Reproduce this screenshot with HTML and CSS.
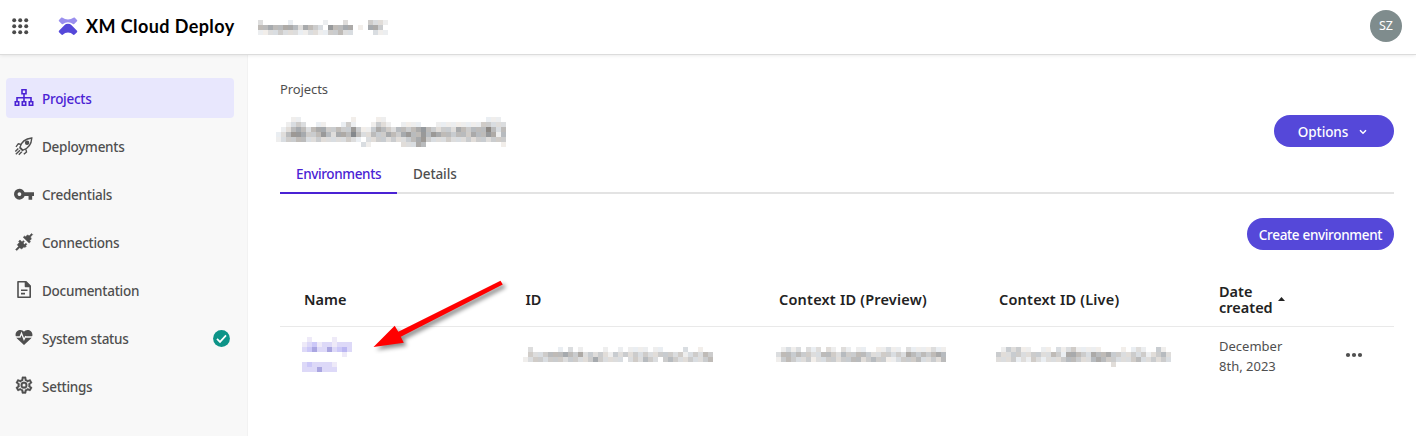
FILE: index.html
```html
<!DOCTYPE html>
<html lang="en">
<head>
<meta charset="utf-8">
<title>XM Cloud Deploy</title>
<link rel="stylesheet" href="styles.css">
</head>
<body>
<header class="topbar">
  <svg class="apps" width="18" height="18" viewBox="0 0 18 18" fill="#4b4b4b"><circle cx="2.2" cy="2.2" r="2"/><circle cx="8.2" cy="2.2" r="2"/><circle cx="14.2" cy="2.2" r="2"/><circle cx="2.2" cy="8.2" r="2"/><circle cx="8.2" cy="8.2" r="2"/><circle cx="14.2" cy="8.2" r="2"/><circle cx="2.2" cy="14.2" r="2"/><circle cx="8.2" cy="14.2" r="2"/><circle cx="14.2" cy="14.2" r="2"/></svg>
  <svg class="logo" width="20" height="20" viewBox="0 0 20 20"><path d="M1 3 3.400.6Q4 .2 4.600.8Q6.800 2.500 10 2.500T15.400.8Q16 .2 16.600.6L19 3Q19.600 3.700 19 4.300L16.200 7Q15.600 7.500 15 7Q12.800 5.200 10 5.200T5 7Q4.400 7.500 3.800 7L1 4.300Q.4 3.700 1 3Z" fill="#9a8fee"/><path d="M10 6.800Q12.200 6.800 13.600 8.200L19 13.800Q19.600 14.500 19 15.200L16.600 17.600Q16 18.200 15.300 17.700Q13 15.600 10 15.600T4.700 17.700Q4 18.200 3.400 17.600L1 15.200Q.4 14.500 1 13.800L6.400 8.200Q7.800 6.800 10 6.800Z" fill="#5548d9"/></svg>
  <span class="brand">XM Cloud Deploy</span>
  <svg class="mosaic org" data-rows="org"></svg>
  <span class="avatar">SZ</span>
</header>
<div class="shell">
  <nav class="sidebar">
    <a class="item active"><svg class="icon" viewBox="0 0 20 20" fill="none" stroke="currentColor" stroke-width="1.600"><path d="M8 1.800h4v4H8zM1.300 13.800h3.400v3.400H1.300zM8.300 13.800h3.400v3.400H8.300zM15.300 13.800h3.400v3.400h-3.400zM10 6v7.500M3 13.500V9.800h14v3.700"/></svg><span>Projects</span></a>
    <a class="item"><svg class="icon" viewBox="0 0 20 20" fill="none" stroke="currentColor" stroke-width="1.400"><path d="M6 11.200Q8 3.200 17.800 2Q17.200 11.400 9 14.200ZM6.500 8.200 4.300 7.700 2 10.800M12 13.700l.5 2.300-2.700 2.300M5.500 11.500 9 15M4.300 12.500 1.300 15.500M6 14.200 1.800 18.300M7.800 15.700l-3 3"/><circle cx="13.100" cy="6.800" r="1.500" fill="currentColor"/></svg><span>Deployments</span></a>
    <a class="item"><svg class="icon" viewBox="1 0.800 22 22" fill="currentColor"><path d="M7 14c-1.100 0-2-.9-2-2s.9-2 2-2 2 .9 2 2-.9 2-2 2m5.650-4C11.830 7.670 9.610 6 7 6a6 6 0 0 0 0 12c2.610 0 4.830-1.670 5.650-4H17v4h4v-4h2v-4z"/></svg><span>Credentials</span></a>
    <a class="item"><svg class="icon" viewBox="0 0 20 20" fill="currentColor" stroke="currentColor" stroke-width=".5"><path d="M1.600 17.400 4.500 14.500 3.300 12.700 5.500 10.300 4.600 9.300 6 8 8 9.900 9.300 8.600 10.400 9.700 9.100 11 10.600 12.500 11.900 11.200 13 12.300 11.700 13.600 12.300 14.300 11 15.600 10 14.800 7.700 16.900 5.700 15.700 2.700 18.500ZM9.200 5.300 10.500 4 11.600 4.800 13.400 2.900 15.300 3.800 17.600 1.500 18.700 2.600 16.500 4.900 17.400 6.900 15.600 8.800 16.500 9.800 15.100 11.100Z"/></svg><span>Connections</span></a>
    <a class="item"><svg class="icon" viewBox="0 0 20 20" fill="none" stroke="currentColor" stroke-width="1.600" stroke-linejoin="round"><path d="M4 1.800h8L16.200 6v11.200H4z"/><path d="M11.500 2v4.500h4.500z" fill="currentColor"/><path d="M7 10.300h6.500M7 13.600h4"/></svg><span>Documentation</span></a>
    <a class="item"><svg class="icon" viewBox="0 0 20 20"><path d="M10 17 3 10.500C-.5 6 3 2 6.400 2 8 2 9.200 2.700 10 3.800 10.800 2.700 12 2 13.600 2 17 2 20.500 6 17 10.500Z" fill="currentColor"/><path d="M1 9h5l1.500-3.800L10 11.500l1.500-3L12.500 9H19" fill="none" stroke="#f8f8f8" stroke-width="1.300"/></svg><span>System status</span><svg class="ok" width="17" height="17" viewBox="0 0 17 17"><circle cx="8.500" cy="8.500" r="8.400" fill="#0d9488"/><path d="m4 8.900 3 3 6-6.500" fill="none" stroke="#fff" stroke-width="1.700"/></svg></a>
    <a class="item"><svg class="icon" viewBox="0 1 24 24" fill="currentColor" stroke="currentColor" stroke-width=".4"><path d="M12 8a4 4 0 0 1 4 4 4 4 0 0 1-4 4 4 4 0 0 1-4-4 4 4 0 0 1 4-4m0 2a2 2 0 0 0-2 2 2 2 0 0 0 2 2 2 2 0 0 0 2-2 2 2 0 0 0-2-2m-2 12c-.25 0-.46-.18-.5-.42l-.37-2.650c-.63-.25-1.170-.59-1.690-.99l-2.490 1.010c-.22.08-.49 0-.61-.22l-2-3.460c-.13-.22-.07-.49.12-.64l2.110-1.660L4.500 12l.07-1-2.110-1.630c-.19-.15-.25-.42-.12-.64l2-3.460c.12-.22.39-.31.61-.22l2.490 1c.52-.39 1.060-.73 1.690-.98l.37-2.650c.04-.24.25-.42.5-.42h4c.25 0 .46.18.5.42l.37 2.650c.63.25 1.170.59 1.690.98l2.490-1c.22-.09.49 0 .61.22l2 3.460c.13.22.07.49-.12.64L19.430 11l.07 1-.07 1 2.110 1.630c.19.15.25.42.12.64l-2 3.460c-.12.22-.39.31-.61.22l-2.490-1c-.52.39-1.060.73-1.690.98l-.37 2.650c-.04.24-.25.42-.5.42h-4m1.250-18l-.37 2.610c-1.200.25-2.260.89-3.030 1.780L5.440 7.350l-.75 1.300L6.800 10.200a5.550 5.550 0 0 0 0 3.600l-2.120 1.560.75 1.300 2.430-1.040c.77.88 1.820 1.520 3.010 1.760l.37 2.620h1.520l.37-2.610c1.190-.25 2.240-.89 3.010-1.770l2.430 1.040.75-1.300-2.120-1.550c.4-1.170.4-2.440 0-3.610l2.110-1.550-.75-1.300-2.410 1.040a5.420 5.420 0 0 0-3.030-1.770L12.750 4z"/></svg><span>Settings</span></a>
  </nav>
  <main class="main">
    <div class="crumb">Projects</div>
    <div class="titlebar">
      <svg class="mosaic project" data-rows="project"></svg>
      <button class="btn options">Options<svg width="8" height="6" viewBox="0 0 8 6"><path d="m1 1.200 3 3 3-3" fill="none" stroke="#fff" stroke-width="1.500"/></svg></button>
    </div>
    <div class="tabs"><a class="tab on">Environments</a><a class="tab">Details</a></div>
    <div class="actions"><button class="btn create">Create environment</button></div>
    <div class="grid head">
      <span>Name</span><span>ID</span><span class="context">Context ID (Preview)</span><span class="context">Context ID (Live)</span>
      <span class="date">Date created<svg class="sort" width="7" height="4" viewBox="0 0 7 4"><path d="M0 4 3.500 0 7 4z" fill="#222"/></svg></span><span></span>
    </div>
    <div class="grid row">
      <svg class="mosaic name" data-rows="name"></svg>
      <svg class="mosaic id" data-rows="id"></svg>
      <svg class="mosaic id" data-rows="preview"></svg>
      <svg class="mosaic id" data-rows="live"></svg>
      <span class="when">December<br>8th, 2023</span>
      <svg class="more" width="18" height="6" viewBox="0 0 18 6" fill="#4f4f4f"><circle cx="3" cy="3" r="2.100"/><circle cx="9" cy="3" r="2.100"/><circle cx="15" cy="3" r="2.100"/></svg>
    </div>
  </main>
</div>
<svg class="arrow" width="150" height="84" viewBox="365 274 150 84"><path d="M500.500 280.800 502.800 284.500 400.800 336.800 403.800 342.800 373.500 347 394.700 325.700 398.300 331.800Z" fill="#f00"/></svg>
<script src="script.js"></script>
</body>
</html>
```

FILE: styles.css
```css
* { box-sizing: border-box; }
body { margin: 0; width: 1416px; height: 436px; overflow: hidden; background: #fff; font-family: "Noto Sans", "Open Sans", sans-serif; font-size: 13.5px; color: #4f4f4f; }
svg { display: block; flex: none; }
.topbar { position: relative; z-index: 1; height: 54px; display: flex; align-items: flex-start; background: #fff; box-shadow: 0 1px 0 #dcdcdc, 0 1px 4px rgba(0,0,0,.12); }
.apps { margin: 18px 0 0 12px; }
.logo { margin: 17px 0 0 28px; }
.brand { width: 171px; margin: 13px 0 0 8px; font: 700 18px/27px Lato, sans-serif; letter-spacing: .42px; color: #000; white-space: nowrap; }
.mosaic { shape-rendering: crispEdges; overflow: visible; }
.org { margin: 20px 0 0 -4px; }
.avatar { width: 32px; height: 32px; margin: 10px 14px 0 auto; border-radius: 50%; background: #7f8c8d; color: #fff; font-size: 12.5px; line-height: 32px; text-align: center; }
.shell { display: flex; height: 382px; }
.sidebar { width: 248px; padding: 24px 14px 0 6px; display: flex; flex-direction: column; gap: 8px; background: #f8f8f8; box-shadow: inset -1px 0 0 #f2f2f2; }
.item { height: 40px; padding: 0 4px 0 8px; display: flex; align-items: center; gap: 8px; border-radius: 4px; font-weight: 500; line-height: 20px; letter-spacing: -.27px; white-space: nowrap; }
.item span { padding-top: 2px; }
.active { background: #e8e7fd; color: #4a22d4; }
.icon { width: 20px; height: 20px; }
.ok { margin-left: auto; }
.main { width: 1168px; padding: 25px 22px 0 32px; }
.crumb { height: 21px; line-height: 20px; font-size: 13px; letter-spacing: -.1px; }
.titlebar { height: 54px; display: flex; justify-content: space-between; }
.project { margin: 17px 0 0 -4px; }
.btn { height: 32px; border: 0; border-radius: 16px; background: #5548d9; color: #fff; font: 500 13.5px/20px "Noto Sans", sans-serif; letter-spacing: -.33px; padding: 2px 0 0; white-space: nowrap; display: flex; align-items: center; justify-content: center; }
.options { width: 120px; margin-top: 15px; gap: 11px; letter-spacing: -.1px; padding-right: 3px; }
.tabs { height: 40px; display: flex; border-bottom: 2px solid #e3e3e3; }
.tab { height: 40px; padding: 0 16px; line-height: 41px; font-weight: 500; letter-spacing: -.1px; }
.on { width: 117px; color: #4a22d4; border-bottom: 2px solid #4a22d4; letter-spacing: -.37px; }
.actions { height: 78px; padding-top: 24px; display: flex; justify-content: flex-end; }
.create { width: 147px; }
.grid { display: grid; grid-template-columns: 221.5px 253.5px 220px 220px 122px 28px; padding-left: 24px; }
.head { height: 55px; align-items: center; border-bottom: 1px solid #e9e9e9; color: #222; font-size: 14.5px; font-weight: 600; line-height: 16px; }
.context { letter-spacing: .2px; }
.date { position: relative; width: 66px; }
.sort { position: absolute; left: 59px; top: 14px; }
.row { height: 78px; align-items: start; }
.name { margin: 10px 0 0 -2px; }
.id { margin: 20px 0 0 -3px; }
.when { margin-top: 9px; font-size: 13px; line-height: 20px; }
.more { margin: 25px 0 0 4px; }
.arrow { position: absolute; left: 365px; top: 274px; z-index: 2; filter: drop-shadow(3px 3px 2px rgba(0,0,0,.45)); }
```

FILE: script.js
```js
// Redacted values: one hex digit per 5px cell, 0 = darkest, f = background.
const mosaics = {
  org: [
    'fdfffffeffffffefffdffffcdde',
    'fbbabbaabdabcdf9bbaafefaacf',
    'feeddcdddeeddeeccbddffffdee'
  ],
  project: [
    'fffeeffffffffffeffffeeffffffffffffffffffffeeef',
    'ffedcdffeefffecefffecdeffeeeefffeeeeeeeeeccddd',
    'fedbabdbaaccbcc9ceecabcdbbcba9bcdccdabcbbb8bdb',
    'edb99accb9bdaab8bddbccabca9bb9b9abbcbbcabb9aeb',
    'edccbbddcdddddcdefddccdcddcba9cdddcdddcdccdccc',
    'fffffffffffffffffdeffffffdddabfffffffffffffffe'
  ],
  name: ['feffffefff', 'edceddeddd', 'dcaddadcbd', 'ffffffffef', '', 'dcdddde', 'dddaddd'],
  id: [
    'fdfffffefdfeffffeffefeeeefeeffffdffeff',
    'fcddcbbbabcadcdcdecdcdcdcddcccdcedcdbc',
    'edccdcccdccddcacddddfdcdbcdfcbcddcddcb'
  ],
  preview: [
    'fededfdedfdefdefeeffeedeefdeeeedee',
    'dbbcbccddbbcdbccbbcddccdcdabcbcbab',
    'ecbcddceddccdccbbdcbcceedcccbddcdb'
  ],
  live: [
    'fecdceeffeefdedceeeeeffffefedeffcef',
    'cddccddccddbceaabcdabbaccddcdcedcbd',
    'dddcedecdedddcbbcddbabccdddcbddcdcd',
    'fffffffffffffffffffffffdfffffffffff'
  ]
};
const CELL = 5;
const NS = 'http://www.w3.org/2000/svg';
document.querySelectorAll('.mosaic').forEach(svg => {
  const key = svg.dataset.rows;
  const rows = mosaics[key];
  svg.setAttribute('width', Math.max(...rows.map(r => r.length)) * CELL);
  svg.setAttribute('height', rows.length * CELL);
  rows.forEach((row, y) => [...row].forEach((digit, x) => {
    if (digit === 'f') return;
    const v = parseInt(digit, 16) * 17;
    const rect = document.createElementNS(NS, 'rect');
    rect.setAttribute('x', x * CELL);
    rect.setAttribute('y', y * CELL);
    rect.setAttribute('width', CELL);
    rect.setAttribute('height', CELL);
    const shift = ((x * 7 + y * 3) % 5 - 2) * 2;
    rect.setAttribute('fill', key === 'name' ? `rgb(${v},${v - 4},${Math.min(248, v + 55)})` : `rgb(${v - shift},${v},${v + shift})`);
    svg.appendChild(rect);
  }));
});
```
